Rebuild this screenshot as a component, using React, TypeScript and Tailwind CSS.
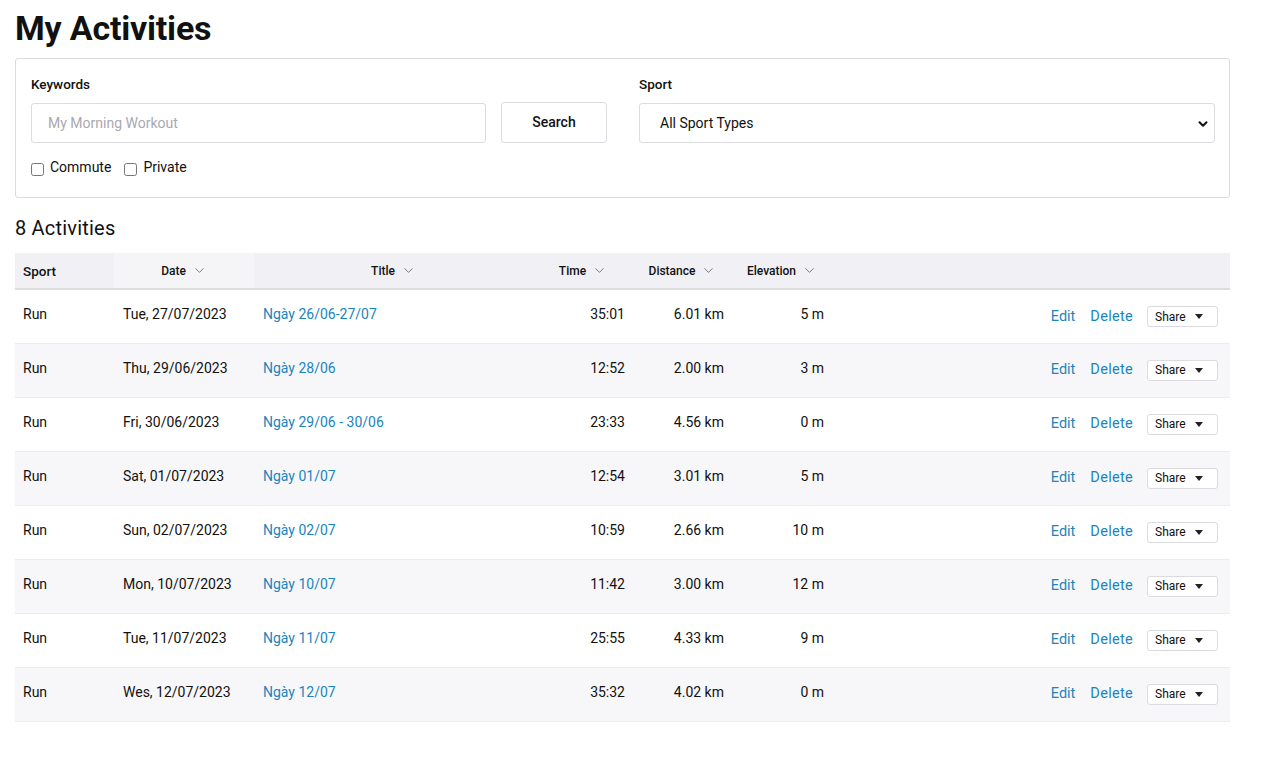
import { ChevronDown } from 'lucide-react';

type Activity = {
  sport: string;
  date: string;
  title: string;
  time: string;
  distance: string;
  elevation: string;
};

const activities: Activity[] = [
  { sport: 'Run', date: 'Tue, 27/07/2023', title: 'Ngày 26/06-27/07', time: '35:01', distance: '6.01 km', elevation: '5 m' },
  { sport: 'Run', date: 'Thu, 29/06/2023', title: 'Ngày 28/06', time: '12:52', distance: '2.00 km', elevation: '3 m' },
  { sport: 'Run', date: 'Fri, 30/06/2023', title: 'Ngày 29/06 - 30/06', time: '23:33', distance: '4.56 km', elevation: '0 m' },
  { sport: 'Run', date: 'Sat, 01/07/2023', title: 'Ngày 01/07', time: '12:54', distance: '3.01 km', elevation: '5 m' },
  { sport: 'Run', date: 'Sun, 02/07/2023', title: 'Ngày 02/07', time: '10:59', distance: '2.66 km', elevation: '10 m' },
  { sport: 'Run', date: 'Mon, 10/07/2023', title: 'Ngày 10/07', time: '11:42', distance: '3.00 km', elevation: '12 m' },
  { sport: 'Run', date: 'Tue, 11/07/2023', title: 'Ngày 11/07', time: '25:55', distance: '4.33 km', elevation: '9 m' },
  { sport: 'Run', date: 'Wes, 12/07/2023', title: 'Ngày 12/07', time: '35:32', distance: '4.02 km', elevation: '0 m' },
];

function SortHeader({ label }: { label: string }) {
  return (
    <span className="inline-flex items-center gap-[6px]">
      {label}
      <ChevronDown size={15} strokeWidth={1.1} className="text-[#444]" />
    </span>
  );
}

export default function App() {
  return (
    <div className="min-h-screen bg-white px-[15px] pt-[8px] text-[#111] font-['Roboto','Liberation_Sans',sans-serif]">
      <div className="w-[1215px]">
        <h1 className="text-[34px] font-bold leading-[40px] tracking-[-0.2px] mb-[10px]">My Activities</h1>

        {/* filters */}
        <div className="border border-[#dcdce0] rounded-[3px] px-[15px] pt-[15px] pb-[19px] flex gap-[32px]">
          <div className="w-[576px]">
            <label className="block text-[13.5px] font-medium mb-[9px]">Keywords</label>
            <div className="flex gap-[15px]">
              <input
                placeholder="My Morning Workout"
                className="w-[455px] h-[40px] border border-[#dcdce0] rounded-[3px] px-[16px] text-[14px] placeholder:text-[#a9a9b2] outline-none"
              />
              <button className="w-[106px] h-[41px] -mt-px border border-[#dcdce0] rounded-[3px] text-[14px] font-medium bg-white">
                Search
              </button>
            </div>
            <div className="flex items-center gap-[13px] mt-[14px] text-[14px]">
              <label className="flex items-center gap-[6px]">
                <input type="checkbox" className="w-[13px] h-[13px] mt-[3px]" />
                Commute
              </label>
              <label className="flex items-center gap-[6px]">
                <input type="checkbox" className="w-[13px] h-[13px] mt-[3px]" />
                Private
              </label>
            </div>
          </div>
          <div className="flex-1">
            <label className="block text-[13.5px] font-medium mb-[9px]">Sport</label>
            <div className="relative w-[576px] h-[40px] border border-[#dcdce0] rounded-[3px] flex items-center pl-[20px] text-[14px]">
              All Sport Types
              <ChevronDown size={14} strokeWidth={3.5} className="absolute right-[4px] top-[13px]" />
            </div>
          </div>
        </div>

        <h2 className="text-[20px] leading-[24px] mt-[18px] mb-[13px] tracking-[0.2px]">8 Activities</h2>

        <table className="w-full table-fixed border-collapse text-[14px]">
          <colgroup>
            <col className="w-[99px]" />
            <col className="w-[140px]" />
            <col className="w-[279px]" />
            <col className="w-[100px]" />
            <col className="w-[99px]" />
            <col className="w-[100px]" />
            <col />
          </colgroup>
          <thead>
            <tr className="bg-[#f0f0f5] border-b-2 border-[#dcdce0] h-[36px] text-[12px]">
              <th className="text-left pl-[8px] text-[13.5px] font-medium">Sport</th>
              <th className="bg-[#f5f5f7] font-medium"><SortHeader label="Date" /></th>
              <th className="font-medium"><SortHeader label="Title" /></th>
              <th className="font-medium"><SortHeader label="Time" /></th>
              <th className="font-medium"><SortHeader label="Distance" /></th>
              <th className="font-medium"><SortHeader label="Elevation" /></th>
              <th />
            </tr>
          </thead>
          <tbody>
            {activities.map((a, i) => (
              <tr key={i} className={`h-[54px] border-b border-[#ececf0] ${i % 2 === 1 ? 'bg-[#f7f7fa]' : 'bg-white'}`}>
                <td className="pl-[8px] pb-[4px]">{a.sport}</td>
                <td className="pl-[9px] pb-[4px]">{a.date}</td>
                <td className="pl-[9px] pb-[4px] text-[#1a85bd]">{a.title}</td>
                <td className="text-right pr-[8px] pb-[4px]">{a.time}</td>
                <td className="text-right pr-[8px] pb-[4px]">{a.distance}</td>
                <td className="text-right pr-[8px] pb-[4px]">{a.elevation}</td>
                <td className="pr-[12px]">
                  <div className="flex items-center justify-end gap-[15px] text-[14.5px]">
                    <span className="text-[#1a85bd]">Edit</span>
                    <span className="text-[#1a85bd] tracking-[0.3px]">Delete</span>
                    <button className="ml-[-1px] w-[71px] h-[21px] border border-[#dcdce0] rounded-[3px] bg-white flex items-center pl-[7px] gap-[9px] text-[12px]">
                      Share
                      <svg width="8" height="5" viewBox="0 0 8 5"><path d="M0 0h8L4 5z" fill="#222" /></svg>
                    </button>
                  </div>
                </td>
              </tr>
            ))}
          </tbody>
        </table>
      </div>
    </div>
  );
}
